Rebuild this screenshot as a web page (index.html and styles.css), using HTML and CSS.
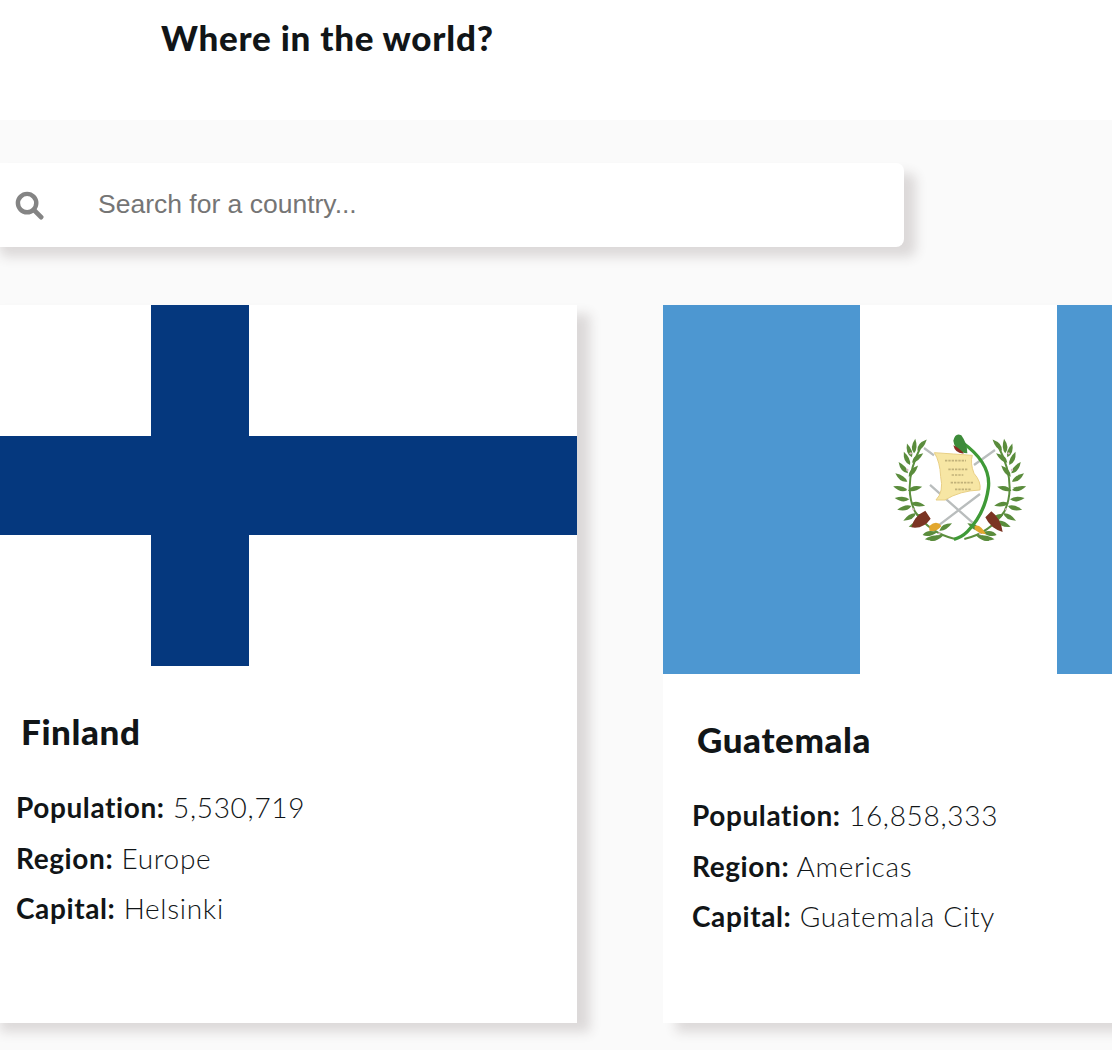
FILE: index.html
```html
<!DOCTYPE html>
<html lang="en">
<head>
  <meta charset="UTF-8" />
  <title>Where in the world?</title>
  <link rel="stylesheet" href="styles.css">
</head>
<body>

<header class="header">
  <h1>Where in the world?</h1>
</header>

<main class="content">
  <div class="search-box">
    <svg class="search-icon" viewBox="0 0 30 30" aria-hidden="true">
      <circle cx="12.5" cy="12.5" r="9.5" fill="none" stroke="#848484" stroke-width="4.6"/>
      <path d="M19.5 19.5 L27 27" stroke="#848484" stroke-width="5" stroke-linecap="round"/>
    </svg>
    <input type="text" placeholder="Search for a country..." />
  </div>

  <div class="countries">
    <article class="card">
      <svg class="flag flag-fi" viewBox="0 0 590 361" preserveAspectRatio="none" role="img" aria-label="Flag of Finland">
        <defs>
          <filter id="edge" color-interpolation-filters="sRGB"><feGaussianBlur stdDeviation="0.6"/></filter>
        </defs>
        <rect width="590" height="361" fill="#fff"/>
        <g filter="url(#edge)">
          <rect x="164" y="-10" width="98" height="381" fill="#05387e"/>
          <rect x="-10" y="131" width="610" height="99" fill="#05387e"/>
        </g>
      </svg>
      <div class="card-body">
        <h2>Finland</h2>
        <p><b>Population:</b> 5,530,719</p>
        <p><b>Region:</b> Europe</p>
        <p><b>Capital:</b> Helsinki</p>
      </div>
    </article>

    <article class="card">
      <svg class="flag flag-gt" viewBox="663 305 590 369" role="img" aria-label="Flag of Guatemala">
        <defs>
          <path id="leaf" d="M0 0 Q16 -16 44 0 Q16 12 0 0Z" fill="#5a8c3c"/>
          <filter id="soft" color-interpolation-filters="sRGB"><feGaussianBlur stdDeviation="1"/></filter>
          <g id="branch">
            <path d="M225 357 Q150 340 105 275 Q65 190 125 75" fill="none" stroke="#5c8f3e" stroke-width="6"/>
            <use href="#leaf" transform="translate(112 92) rotate(-50)"/>
            <use href="#leaf" transform="translate(102 100) rotate(-85)"/>
            <use href="#leaf" transform="translate(96 112) rotate(-110)"/>
            <use href="#leaf" transform="translate(90 135) rotate(-115)"/>
            <use href="#leaf" transform="translate(84 160) rotate(-130)"/>
            <use href="#leaf" transform="translate(82 185) rotate(-145)"/>
            <use href="#leaf" transform="translate(82 210) rotate(-165)"/>
            <use href="#leaf" transform="translate(88 238) rotate(-175)"/>
            <use href="#leaf" transform="translate(94 258) rotate(165)"/>
            <use href="#leaf" transform="translate(108 280) rotate(150)"/>
            <use href="#leaf" transform="translate(126 302) rotate(155)"/>
            <use href="#leaf" transform="translate(178 350) rotate(170)"/>
            <use href="#leaf" transform="translate(128 345) rotate(-10)"/>
            <use href="#leaf" transform="translate(150 362) rotate(-22)"/>
            <use href="#leaf" transform="translate(178 332) rotate(-30)"/>
            <use href="#leaf" transform="translate(96 128) rotate(-40)"/>
            <use href="#leaf" transform="translate(86 170) rotate(-50)"/>
            <use href="#leaf" transform="translate(84 212) rotate(-15)"/>
            <use href="#leaf" transform="translate(92 250) rotate(10)"/>
            <use href="#leaf" transform="translate(108 284) rotate(25)"/>
            <circle cx="92" cy="100" r="3.5" fill="#d9b9c4"/>
            <circle cx="82" cy="150" r="3.5" fill="#d9b9c4"/>
            <circle cx="100" cy="268" r="3.5" fill="#d9b9c4"/>
            <circle cx="178" cy="340" r="3.5" fill="#d9b9c4"/>
          </g>
        </defs>
        <rect x="663" y="305" width="197" height="369" fill="#4d97d1"/>
        <rect x="860" y="305" width="197" height="369" fill="#fff"/>
        <rect x="1057" y="305" width="196" height="369" fill="#4d97d1"/>
        <g transform="translate(880 420) scale(0.3333)" filter="url(#soft)">
          <use href="#branch"/>
          <use href="#branch" transform="translate(478 0) scale(-1 1)"/>
          <path d="M132 84 L162 106 M345 90 L282 135 M150 195 L278 308 M300 222 L168 322" stroke="#b9bdbd" stroke-width="7"/>
          <path d="M94 322 Q102 288 136 272 L152 296 Q130 328 94 322Z M368 336 Q332 326 316 292 L334 274 Q362 295 368 336Z" fill="#7b3423"/>
          <path d="M148 318 Q170 298 184 318 Q170 338 148 332Z M284 318 Q300 310 318 342 Q296 342 284 328Z" fill="#e2a72e"/>
          <path d="M163 98 Q220 102 277 106 Q270 130 282 160 Q304 185 300 210 Q240 212 195 240 L168 240 Q192 215 182 170 Q180 125 163 98Z" fill="#f7e6a4" stroke="#e8cf85" stroke-width="3"/>
          <path d="M195 122 H258 M205 148 H262 M215 165 H250 M212 188 H280 M225 208 H272" stroke="#c2b27a" stroke-width="5" stroke-dasharray="7 3"/>
          <path d="M245 66 Q335 130 325 205 Q315 280 262 335 Q245 352 222 358" fill="none" stroke="#3f9a37" stroke-width="10"/>
          <path d="M220 62 Q226 36 244 46 Q262 70 262 100 Q226 98 220 62Z" fill="#3d8b3a"/>
          <path d="M220 76 Q234 82 252 100 Q226 102 220 76Z" fill="#8a2b22"/>
        </g>
      </svg>
      <div class="card-body">
        <h2>Guatemala</h2>
        <p><b>Population:</b> 16,858,333</p>
        <p><b>Region:</b> Americas</p>
        <p><b>Capital:</b> Guatemala City</p>
      </div>
    </article>
  </div>
</main>

</body>
</html>
```

FILE: styles.css
```css
html, body {
  margin: 0;
  overflow-x: hidden;
}

body {
  font-family: "Lato", "Open Sans", sans-serif;
  background: #fafafa;
  color: #111517;
}

.header {
  background: #fff;
  height: 120px;
  padding-left: 161px;
  box-sizing: border-box;
}

.header h1 {
  margin: 0;
  padding-top: 16px;
  font-size: 35px;
  line-height: 42px;
  font-weight: 900;
  letter-spacing: 0.75px;
}

.content {
  margin-left: -13px;
  padding: 43px 0 27px;
}

.search-box {
  width: 917px;
  height: 84px;
  display: flex;
  align-items: center;
  background: #fff;
  border-radius: 8px;
  box-shadow: 12px 10px 12px rgba(70, 50, 50, 0.16);
}

.search-icon {
  width: 29px;
  height: 29px;
  margin-left: 28px;
}

.search-box input {
  flex: 1;
  margin-left: 54px;
  margin-bottom: 2px;
  padding-left: 0;
  border: none;
  outline: none;
  background: transparent;
  font-family: "Liberation Sans", Arial, sans-serif;
  font-size: 26.5px;
}

.countries {
  display: grid;
  grid-template-columns: 590px 590px;
  column-gap: 86px;
  margin-top: 58px;
}

.card {
  height: 718px;
  background: #fff;
  box-shadow: 13px 9px 11px rgba(70, 50, 50, 0.16);
}

.flag {
  display: block;
  width: 590px;
}

.flag-fi {
  height: 361px;
}

.flag-gt {
  height: 369px;
}

.card-body {
  padding: 44px 0 0 29px;
}

.card-body h2 {
  margin: 0 0 30px 5px;
  font-size: 35px;
  line-height: 42px;
  font-weight: 900;
  letter-spacing: 0.6px;
}

.card-body p {
  margin: 0;
  font-size: 28px;
  line-height: 50.5px;
  font-weight: 300;
  letter-spacing: 0.7px;
}

.card-body b {
  font-weight: 700;
  letter-spacing: 0.6px;
}
```
